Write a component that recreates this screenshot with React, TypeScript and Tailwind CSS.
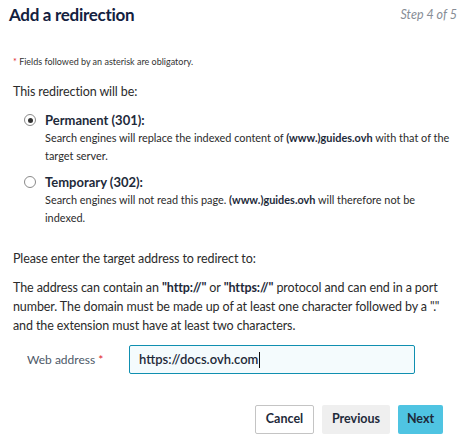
import React from "react";

const font = { fontFamily: "Lato, 'Noto Sans', sans-serif" };

function Radio({ checked }: { checked: boolean }) {
  return (
    <span className="flex h-[12px] w-[12px] shrink-0 items-center justify-center rounded-full border border-[#8a8a8a] bg-white">
      {checked && <span className="h-[5px] w-[5px] rounded-full bg-[#333]" />}
    </span>
  );
}

export default function App() {
  return (
    <div className="h-[444px] w-[464px] bg-white text-[#2b2b2b]" style={font}>
      <div className="flex h-[30px] items-center justify-between pl-[9px] pr-[7px]">
        <h1 className="text-[17px] font-bold leading-[30px] tracking-[-0.3px] text-[#132140]">Add a redirection</h1>
        <span className="text-[12.5px] italic text-[#878d96]">Step 4 of 5</span>
      </div>
      <div className="px-[13px]">
        <p className="mt-[25px] text-[9px] leading-[14px] text-[#333]">
          <span className="text-[#e0242e]">*</span> Fields followed by an asterisk are obligatory.
        </p>
        <p className="mt-[14px] text-[12.5px] leading-[18px] tracking-[-0.1px]">This redirection will be:</p>
        <div className="mt-[10px] flex flex-col gap-[8px] pl-[11px]">
          <div className="flex gap-[9px]">
            <div className="pt-[3px]"><Radio checked /></div>
            <div className="-mr-[8px]">
              <div className="text-[13px] font-bold leading-[18px] text-[#1e2a3a]">Permanent (301):</div>
              <div className="text-[10.9px] leading-[18px]">
                Search engines will replace the indexed content of <b className="text-[#1e2a3a]">(www.)guides.ovh</b> with that of the target server.
              </div>
            </div>
          </div>
          <div className="flex gap-[9px]">
            <div className="pt-[3px]"><Radio checked={false} /></div>
            <div>
              <div className="text-[13px] font-bold leading-[18px] text-[#1e2a3a]">Temporary (302):</div>
              <div className="text-[10.9px] leading-[18px]">
                Search engines will not read this page. <b className="text-[#1e2a3a]">(www.)guides.ovh</b> will therefore not be indexed.
              </div>
            </div>
          </div>
        </div>
        <p className="mt-[23px] text-[12.5px] leading-[18px] tracking-[-0.1px]">Please enter the target address to redirect to:</p>
        <p className="mt-[10px] text-[12.5px] leading-[19px] tracking-[-0.1px]">
          The address can contain an <b className="text-[#1e2a3a]">"http://"</b> or <b className="text-[#1e2a3a]">"https://"</b> protocol and can end in a port number. The domain must be made up of at least one character followed by a "." and the extension must have at least two characters.
        </p>
        <div className="mt-[10px] flex items-center">
          <label className="w-[116px] pl-[14px] text-[12px] text-[#4d5968]">
            Web address <span className="text-[#e0242e]">*</span>
          </label>
          <div className="flex h-[29px] w-[286px] items-center rounded-[2px] border border-[#0f8fb0] bg-[#f4fbfd] px-[9px] text-[13px] font-semibold text-[#1e2a3a]">
            https://docs.ovh.com<span className="ml-[1px] h-[16px] w-[1px] bg-[#111]" />
          </div>
        </div>
        <div className="mt-[31px] flex justify-end gap-[8px] pr-[8px]">
          <button className="h-[29px] w-[59px] rounded-[2px] border border-[#c4c4c4] bg-white text-[12.5px] font-bold text-[#1e2a3a]">Cancel</button>
          <button className="h-[29px] w-[68px] rounded-[2px] bg-[#efefef] text-[12.5px] font-bold text-[#1e2a3a]">Previous</button>
          <button className="h-[29px] w-[45px] rounded-[2px] bg-[#4fc4e2] text-[12.5px] font-bold text-[#1e2a3a]">Next</button>
        </div>
      </div>
    </div>
  );
}
